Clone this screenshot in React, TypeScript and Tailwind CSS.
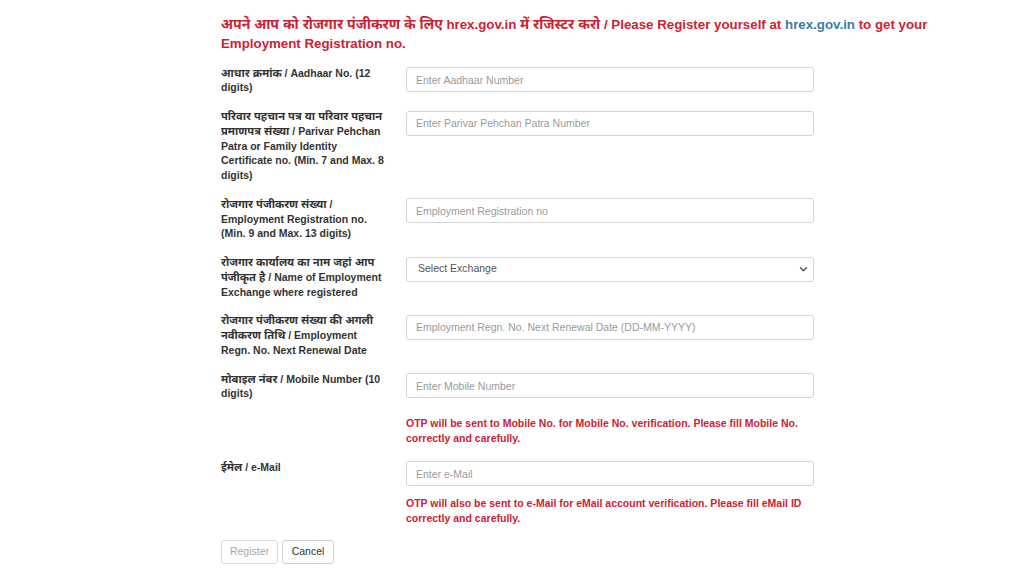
import React from "react";

const font = {
  fontFamily:
    '"Liberation Sans", Arial, "Noto Sans Devanagari", "Noto Sans", sans-serif',
};

function Hi({ children }: { children: React.ReactNode }) {
  return <span className="text-[1.06em] leading-none">{children}</span>;
}

function Row({
  label,
  children,
}: {
  label: React.ReactNode;
  children: React.ReactNode;
}) {
  return (
    <div className="grid grid-cols-[185px_408px] mb-[14px]">
      <div className="pr-[18px] text-[10.5px] leading-[14.75px] font-bold text-[#333]">
        {label}
      </div>
      <div className="pt-[1.5px]">{children}</div>
    </div>
  );
}

function Input({ placeholder }: { placeholder: string }) {
  return (
    <input
      className="block w-full h-[25px] border border-[#d4d4d4] rounded-[3px] px-[9px] text-[10.5px] text-[#555] placeholder:text-[#9a9a9a] bg-white outline-none"
      style={font}
      placeholder={placeholder}
    />
  );
}

export default function App() {
  return (
    <div className="w-[1024px] h-[576px] bg-white overflow-hidden" style={font}>
      <div className="ml-[221px] pt-[15px] w-[745px]">
        <div className="text-[13.3px] leading-[19px] font-bold text-[#cc2233] mb-[12.5px]">
          <Hi>अपने आप को रोजगार पंजीकरण के लिए</Hi> hrex.gov.in <Hi>में रजिस्टर करो</Hi> / Please
          Register yourself at{" "}
          <span className="text-[#3b7ca6]">hrex.gov.in</span> to get your
          Employment Registration no.
        </div>

        <Row label={<><Hi>आधार क्रमांक</Hi> / Aadhaar No. (12 digits)</>}>
          <Input placeholder="Enter Aadhaar Number" />
        </Row>
        <Row
          label={
            <>
              <Hi>परिवार पहचान पत्र या परिवार पहचान प्रमाणपत्र संख्या</Hi> / Parivar
              Pehchan Patra or Family Identity Certificate no. (Min. 7 and Max.
              8 digits)
            </>
          }
        >
          <Input placeholder="Enter Parivar Pehchan Patra Number" />
        </Row>
        <Row
          label={
            <>
              <Hi>रोजगार पंजीकरण संख्या</Hi> / Employment Registration no. (Min. 9
              and Max. 13 digits)
            </>
          }
        >
          <Input placeholder="Employment Registration no" />
        </Row>
        <Row
          label={
            <>
              <Hi>रोजगार कार्यालय का नाम जहां आप पंजीकृत है</Hi> / Name of
              Employment Exchange where registered
            </>
          }
        >
          <div className="relative">
            <div className="flex items-center w-full h-[25px] border border-[#d4d4d4] rounded-[3px] pl-[11px] text-[10.5px] text-[#555] bg-white">
              Select Exchange
            </div>
            <svg
              className="absolute right-[6px] top-[9px]"
              width="9"
              height="7"
              viewBox="0 0 9 7"
              fill="none"
            >
              <path
                d="M1.5 1.8 L4.5 4.8 L7.5 1.8"
                stroke="#555"
                strokeWidth="1.4"
                strokeLinecap="round"
                strokeLinejoin="round"
              />
            </svg>
          </div>
        </Row>
        <Row
          label={
            <>
              <Hi>रोजगार पंजीकरण संख्या की अगली नवीकरण तिथि</Hi> / Employment
              Regn. No. Next Renewal Date
            </>
          }
        >
          <Input placeholder="Employment Regn. No. Next Renewal Date (DD-MM-YYYY)" />
        </Row>
        <Row label={<><Hi>मोबाइल नंबर</Hi> / Mobile Number (10 digits)</>}>
          <Input placeholder="Enter Mobile Number" />
          <div className="mt-[17.5px] text-[10.5px] leading-[15px] font-bold text-[#cc2233]">
            OTP will be sent to Mobile No. for Mobile No. verification. Please
            fill Mobile No. correctly and carefully.
          </div>
        </Row>
        <Row label={<><Hi>ईमेल</Hi> / e-Mail</>}>
          <Input placeholder="Enter e-Mail" />
          <div className="mt-[10px] text-[10.5px] leading-[15px] font-bold text-[#cc2233]">
            OTP will also be sent to e-Mail for eMail account verification.
            Please fill eMail ID correctly and carefully.
          </div>
        </Row>

        <div className="flex gap-[4px] mt-[3px]">
          <button className="h-[24px] w-[57px] border border-[#dcdcdc] rounded-[3px] text-[10.5px] text-[#a8a8a8] bg-white">
            Register
          </button>
          <button className="h-[24px] w-[52px] border border-[#cfcfcf] rounded-[3px] text-[10.5px] text-[#333] bg-white">
            Cancel
          </button>
        </div>
      </div>
    </div>
  );
}
